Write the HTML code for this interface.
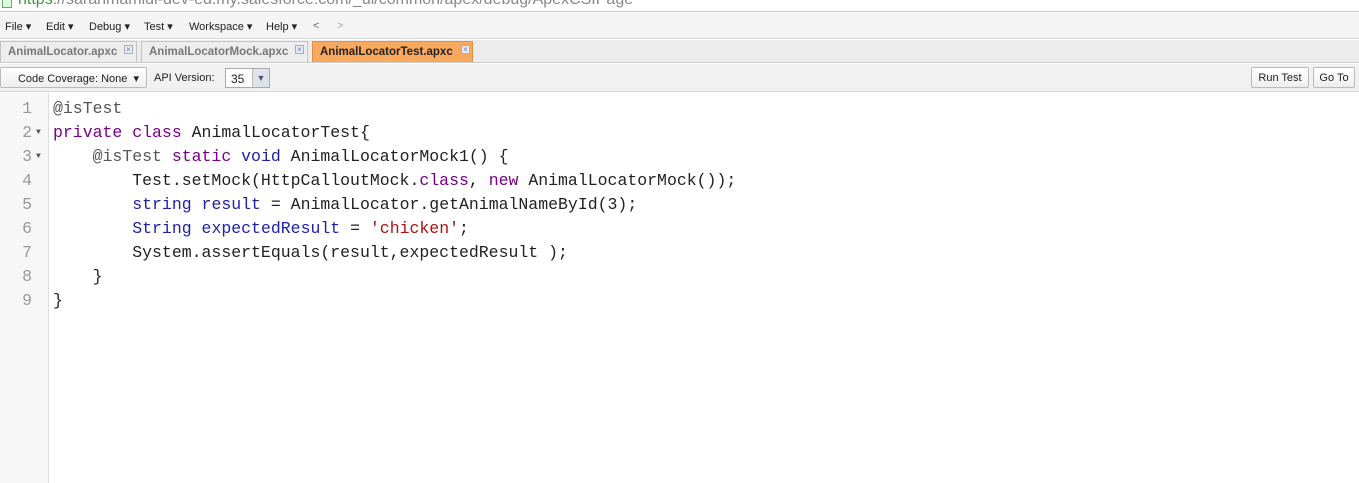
<!DOCTYPE html>
<html><head><style>
*{margin:0;padding:0;box-sizing:border-box}
body{width:1359px;height:483px;overflow:hidden;background:#fff;font-family:"Liberation Sans",Arial,sans-serif;position:relative}
.url{position:absolute;left:0;top:0;width:1359px;height:12px;overflow:hidden;background:#fff;border-bottom:1px solid #c8c8c8}
.url span{position:absolute;left:18px;top:-9px;font-size:16px;color:#888;white-space:nowrap}
.url span b{font-weight:normal;color:#3a9a3a}
.url i{position:absolute;left:2px;top:0;width:10px;height:8px;border:1px solid #6a6;border-top:none;background:#dfd}
.menu{position:absolute;top:13px;left:0;width:1359px;height:26px;background:#f4f4f4;border-bottom:1px solid #d8d8d8;font-size:11px;color:#222}
.menu span{position:absolute;top:7px}
.tabs{position:absolute;top:40px;left:0;width:1359px;height:23px;background:#ececec;border-bottom:1px solid #ccc}
.tab{position:absolute;top:1px;height:21px;border:1px solid #c4c4c4;border-bottom:none;background:#ededed;font-size:11.5px;font-weight:bold;color:#777;padding:4px 0 0 7px}
.tab.act{background:#f9a95e;color:#222;border-color:#e09040}
.x{position:absolute;top:3px;width:9px;height:9px;border:1px solid #aab;background:#e8eef8;font-size:8px;line-height:7px;text-align:center;color:#8899bb;font-weight:bold}
.tb{position:absolute;top:64px;left:0;width:1359px;height:28px;background:#f1f1f1;border-bottom:1px solid #d8d8d8;font-size:11px;color:#222}
.btn{position:absolute;height:21px;border:1px solid #bbb;border-radius:2px;background:linear-gradient(#fff,#eee);font-size:11px;padding:4px 0 0 0;text-align:center}
.gut{position:absolute;top:93px;left:0;width:49px;height:390px;background:#f7f7f7;border-right:1px solid #ddd}
.code{position:absolute;top:97px;left:0;font-family:"Liberation Mono",monospace;font-size:16.5px;line-height:24px;white-space:pre;color:#222}
.ln{position:absolute;left:0;width:32px;text-align:right;color:#999}
.ar{position:absolute;left:36px;font-size:8px;color:#555}
.t{position:absolute;left:53px}
.k{color:#770088}.v{color:#2020a8}.s{color:#aa1111}.a{color:#555}
</style></head><body>
<div class="url"><i></i><span><b>https</b>://saranmamidi-dev-ed.my.salesforce.com/_ui/common/apex/debug/ApexCSIPage</span></div>
<div class="menu">
<span style="left:5px">File ▾</span><span style="left:46px">Edit ▾</span><span style="left:89px">Debug ▾</span><span style="left:144px">Test ▾</span><span style="left:189px">Workspace ▾</span><span style="left:266px">Help ▾</span><span style="left:313px;color:#666">&lt;</span><span style="left:337px;color:#aaa">&gt;</span>
</div>
<div class="tabs">
<div class="tab" style="left:0;width:137px">AnimalLocator.apxc<div class="x" style="left:123px">×</div></div>
<div class="tab" style="left:141px;width:167px">AnimalLocatorMock.apxc<div class="x" style="left:153px">×</div></div>
<div class="tab act" style="left:312px;width:161px">AnimalLocatorTest.apxc<div class="x" style="left:148px">×</div></div>
</div>
<div class="tb">
<div class="btn" style="left:0;width:147px;top:3px;padding-left:10px">Code Coverage: None &nbsp;▾</div>
<span style="position:absolute;left:154px;top:8px">API Version:</span>
<div style="position:absolute;left:225px;top:4px;width:45px;height:20px;border:1px solid #aaa;background:#fff;font-size:12px;padding:3px 0 0 5px">35<div style="position:absolute;right:0;top:0;width:17px;height:18px;background:#dde3ea;border-left:1px solid #bbb;color:#557;font-size:9px;text-align:center;line-height:18px">▼</div></div>
<div class="btn" style="left:1251px;width:58px;top:3px">Run Test</div>
<div class="btn" style="left:1313px;width:42px;top:3px">Go To</div>
</div>
<div class="gut"></div>
<div class="code">
<div class="ln" style="top:0">1</div><div class="ln" style="top:24px">2</div><div class="ln" style="top:48px">3</div><div class="ln" style="top:72px">4</div><div class="ln" style="top:96px">5</div><div class="ln" style="top:120px">6</div><div class="ln" style="top:144px">7</div><div class="ln" style="top:168px">8</div><div class="ln" style="top:192px">9</div>
<div class="ar" style="top:28px;line-height:16px">▼</div><div class="ar" style="top:52px;line-height:16px">▼</div>
<div class="t" style="top:0"><span class="a">@isTest</span></div>
<div class="t" style="top:24px"><span class="k">private</span> <span class="k">class</span> AnimalLocatorTest{</div>
<div class="t" style="top:48px">    <span class="a">@isTest</span> <span class="k">static</span> <span class="v">void</span> AnimalLocatorMock1() {</div>
<div class="t" style="top:72px">        Test.setMock(HttpCalloutMock.<span class="k">class</span>, <span class="k">new</span> AnimalLocatorMock());</div>
<div class="t" style="top:96px">        <span class="v">string</span> <span class="v">result</span> = AnimalLocator.getAnimalNameById(3);</div>
<div class="t" style="top:120px">        <span class="v">String</span> <span class="v">expectedResult</span> = <span class="s">'chicken'</span>;</div>
<div class="t" style="top:144px">        System.assertEquals(result,expectedResult );</div>
<div class="t" style="top:168px">    }</div>
<div class="t" style="top:192px">}</div>
</div>
</body></html>
